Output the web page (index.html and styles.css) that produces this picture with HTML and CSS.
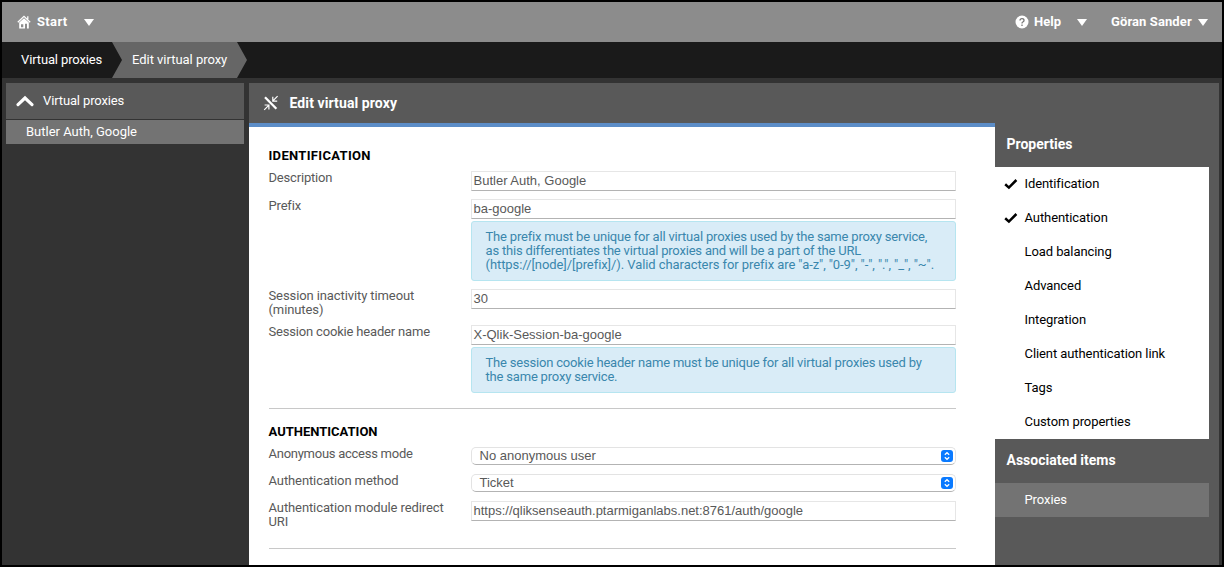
FILE: index.html
```
<!DOCTYPE html>
<html lang="en">
<head>
<meta charset="utf-8">
<title>Edit virtual proxy</title>
<link rel="stylesheet" href="styles.css">
</head>
<body>
<div class="app">
  <header class="topbar">
    <div class="menu start">
      <svg class="home" width="14" height="14" viewBox="0 0 14 14"><path d="M0.8 7.2 7 1.4l6.2 5.8M10.8 1.2v3" fill="none" stroke="#fff" stroke-width="1.3"/><path fill="#fff" fill-rule="evenodd" d="M2.2 7.6 7 3.2l4.8 4.4v5.9H2.2zM4 9.2v3.1h2.3V9.2zM8 8.8v4.7h2V8.8z"/></svg>
      <span>Start</span><i class="caret"></i>
    </div>
    <div class="menu help">
      <svg width="14" height="14" viewBox="0 0 14 14"><circle cx="7" cy="7" r="6.5" fill="#fff"/><path d="M5 5.5Q5 3.7 7 3.7T9 5.4Q9 6.4 7.8 7 7 7.4 7 8.4M7 9.4v1.6" fill="none" stroke="#777" stroke-width="1.3"/></svg>
      <span>Help</span><i class="caret"></i>
    </div>
    <div class="menu user"><span>Göran Sander</span><i class="caret"></i></div>
  </header>
  <nav class="crumbs">
    <span class="crumb first">Virtual proxies</span>
    <span class="crumb current">Edit virtual proxy</span>
  </nav>
  <div class="body">
    <aside class="side">
      <div class="side-head">
        <svg width="18" height="12" viewBox="0 0 18 12"><path d="M2 9.6 9 3l7 6.6" fill="none" stroke="#fff" stroke-width="3.1" stroke-linecap="round"/></svg>
        <span>Virtual proxies</span>
      </div>
      <div class="side-item"><span>Butler Auth, Google</span></div>
    </aside>
    <main class="main">
      <div class="main-head">
        <svg width="16" height="16" viewBox="0 0 16 16" fill="none" stroke="#fff"><path d="M2 2.2 13.4 13.8" stroke-width="2.3"/><path d="M14.6 1.2 10.4 5.4M9.8 1.7v4.4h4.4M1.2 14.8l4.2-4.2M1.6 10h4.3v4.4" stroke-width="1.2"/></svg>
        <h1>Edit virtual proxy</h1>
      </div>
      <div class="columns">
        <div class="form">
          <section class="section">
            <h2 class="wide">Identification</h2>
            <div class="row"><label>Description</label><div class="field"><div class="input">Butler Auth, Google</div></div></div>
            <div class="row"><label>Prefix</label><div class="field"><div class="input">ba-google</div>
              <div class="info">The prefix must be unique for all virtual proxies used by the same proxy service,<br>as this differentiates the virtual proxies and will be a part of the URL<br><span class="chars">(https://[node]/[prefix]/). Valid characters for prefix are "a-z", "0-9", "-", ".", "_", "~".</span></div></div></div>
            <div class="row"><label class="loose">Session inactivity timeout<br>(minutes)</label><div class="field"><div class="input">30</div></div></div>
            <div class="row"><label>Session cookie header name</label><div class="field"><div class="input">X-Qlik-Session-ba-google</div>
              <div class="info">The session cookie header name must be unique for all virtual proxies used by<br>the same proxy service.</div></div></div>
          </section>
          <section class="section auth">
            <h2>Authentication</h2>
            <div class="row"><label class="tight">Anonymous access mode</label><div class="field"><div class="select"><span>No anonymous user</span><svg width="12" height="12" viewBox="0 0 12 12"><rect width="12" height="12" rx="3" fill="#0a7aff"/><path d="M3.8 4.8 6 2.7l2.2 2.1M3.8 7.2 6 9.3l2.2-2.1" fill="none" stroke="#fff" stroke-width="1.2"/></svg></div></div></div>
            <div class="row"><label class="loose">Authentication method</label><div class="field"><div class="select"><span>Ticket</span><svg width="12" height="12" viewBox="0 0 12 12"><rect width="12" height="12" rx="3" fill="#0a7aff"/><path d="M3.8 4.8 6 2.7l2.2 2.1M3.8 7.2 6 9.3l2.2-2.1" fill="none" stroke="#fff" stroke-width="1.2"/></svg></div></div></div>
            <div class="row"><label class="loose">Authentication module redirect<br>URI</label><div class="field"><div class="input">https://qliksenseauth.ptarmiganlabs.net:8761/auth/google</div></div></div>
          </section>
        </div>
        <aside class="props">
          <h3>Properties</h3>
          <ul class="list">
            <li><svg width="14" height="12" viewBox="0 0 14 12"><path d="M1.2 6.3 4.9 9.6 12.4 2" fill="none" stroke="#000" stroke-width="2.5"/></svg>Identification</li>
            <li><svg width="14" height="12" viewBox="0 0 14 12"><path d="M1.2 6.3 4.9 9.6 12.4 2" fill="none" stroke="#000" stroke-width="2.5"/></svg>Authentication</li>
            <li>Load balancing</li>
            <li>Advanced</li>
            <li>Integration</li>
            <li>Client authentication link</li>
            <li>Tags</li>
            <li>Custom properties</li>
          </ul>
          <h3 class="assoc">Associated items</h3>
          <div class="linked">Proxies</div>
        </aside>
      </div>
    </main>
  </div>
</div>
</body>
</html>
```
FILE: styles.css
```
* { box-sizing: border-box; }
body { margin: 0; background: #000; font-family: Roboto, "Noto Sans", sans-serif; font-size: 13px; line-height: 14px; }
h1, h2, h3, ul { margin: 0; padding: 0; }
svg { display: block; flex: none; }
.app { width: 1224px; height: 567px; border: 2px solid #000; background: #333; display: flex; flex-direction: column; overflow: hidden; }

.topbar { height: 40px; flex: none; background: #8c8c8c; color: #fff; font-weight: 700; display: flex; align-items: center; padding: 0 14px 0 15px; }
.menu { display: flex; align-items: center; }
.caret { border: 5px solid transparent; border-top: 7px solid #fff; border-bottom: 0; }
.start span { margin-left: 6px; width: 47px; letter-spacing: 0.35px; }
.help { margin-left: auto; }
.help span { margin-left: 5px; width: 43px; }
.help .caret { margin-right: 24px; }
.user span { width: 87px; white-space: nowrap; letter-spacing: 0.1px; }

.crumbs { height: 36px; flex: none; background: #1a1a1a; color: #fff; display: flex; }
.crumb { line-height: 35px; white-space: nowrap; }
.first { width: 110px; padding-left: 19px; letter-spacing: -0.13px; }
.current { width: 135px; padding-left: 20px; letter-spacing: -0.03px; background: #666; clip-path: polygon(0 0, 125px 0, 100% 50%, 125px 100%, 0 100%, 10px 50%); }

.body { flex: 1; min-height: 0; display: flex; gap: 5px; padding: 5px 3px 0 4px; }
.side { width: 238px; color: #fff; }
.side-head { height: 36px; background: #595959; display: flex; align-items: center; gap: 9px; padding: 0 0 1px 10px; letter-spacing: -0.13px; }
.side-item { height: 24px; margin-top: 1px; background: #737373; padding: 5px 20px; }
.main { flex: 1; background: #595959; display: flex; flex-direction: column; }
.main-head { height: 40px; flex: none; display: flex; align-items: center; gap: 10.5px; padding-left: 14px; color: #fff; }
h1 { font-size: 14px; letter-spacing: 0.1px; }
.columns { flex: 1; display: flex; }

.form { width: 746px; background: #fff; border-top: 4px solid #5c8dc7; padding: 20px 39px 0 20px; color: #595959; }
.section { height: 262px; border-bottom: 1px solid #c8c8c8; }
h2 { height: 24px; margin-left: -0.5px; padding-top: 2px; color: #000; font-size: 13px; line-height: 14px; text-transform: uppercase; }
.wide { letter-spacing: 0.32px; }
.auth { height: 140px; }
.auth h2 { height: 38px; padding-top: 16px; }
.row { display: flex; margin-bottom: 8px; }
.row label { width: 202.5px; margin-left: -0.5px; flex: none; letter-spacing: -0.18px; }
.row .loose { letter-spacing: -0.1px; }
.row .tight { letter-spacing: -0.26px; }
.field { flex: 1; min-width: 0; }
.input { height: 20px; border: 1px solid #e6e6e6; border-bottom-color: #b3b3b3; font: 13px/18px "Liberation Sans", Arial, sans-serif; padding-left: 1.5px; white-space: nowrap; }
.info { margin-top: 2px; padding: 8px 13.5px; border: 1px solid #b6e5f0; border-radius: 3px; background: #d9ecf7; color: #3a87ad; white-space: nowrap; letter-spacing: -0.19px; }
.chars { letter-spacing: -0.07px; }
.select { height: 18px; margin-bottom: 1px; border: 1px solid #e3e3e3; border-bottom-color: #b3b3b3; border-radius: 5px; display: flex; justify-content: space-between; align-items: center; padding: 0 2.5px 0 7.5px; font: 13px/16px "Liberation Sans", Arial, sans-serif; }

.props { width: 214px; color: #fff; }
h3 { height: 44px; padding: 14px 11.5px; font-size: 14px; }
.list { height: 272px; background: #fff; color: #000; list-style: none; }
.list li { height: 34px; display: flex; align-items: center; padding-left: 29.5px; letter-spacing: -0.08px; }
.list svg { margin: 0 6.5px 0 -20.5px; }
.linked { height: 34px; background: #737373; padding: 10px 29.5px; letter-spacing: -0.08px; }
```
